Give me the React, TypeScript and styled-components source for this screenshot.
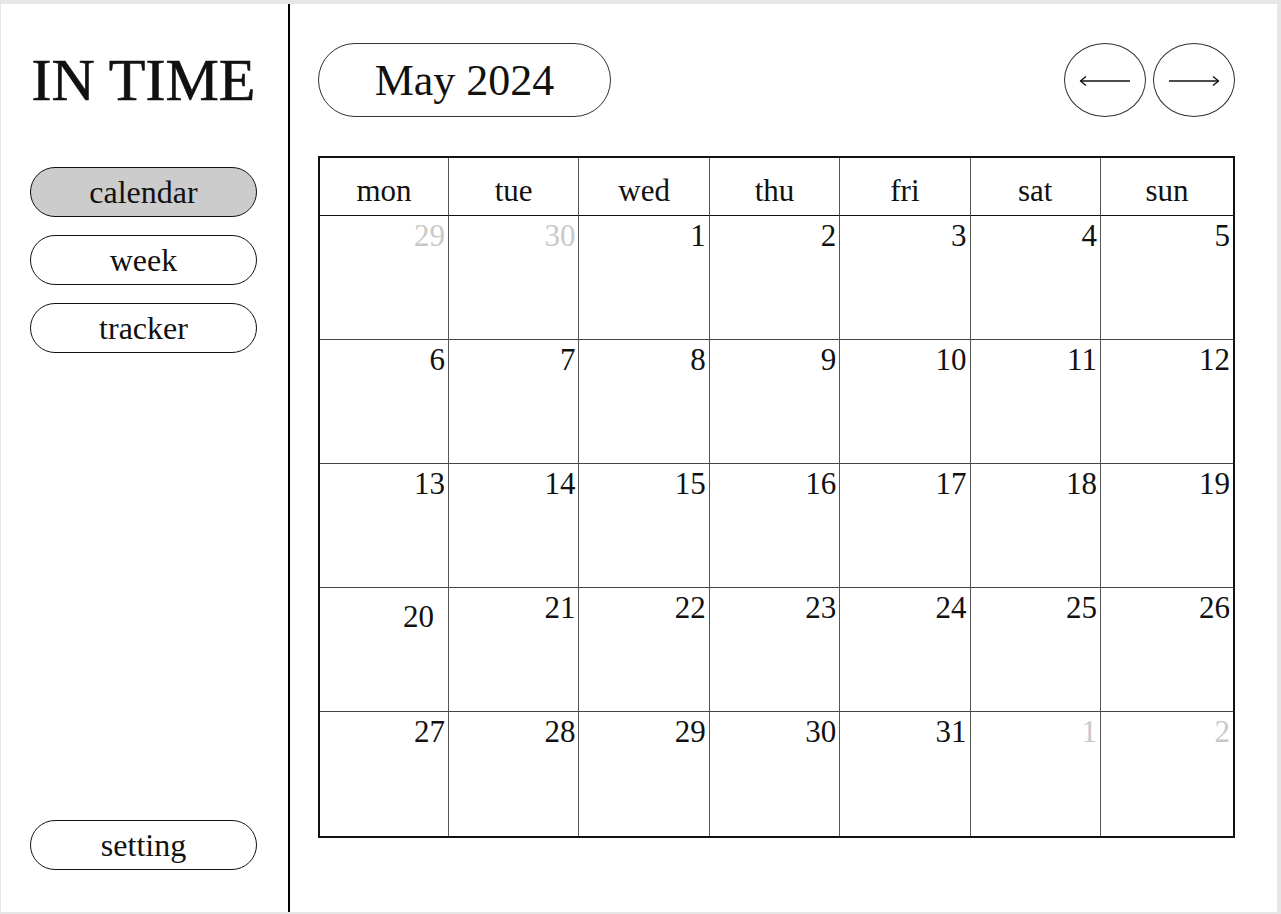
import React from "react";
import styled, { createGlobalStyle } from "styled-components";

const GlobalStyle = createGlobalStyle`
  html, body {
    margin: 0;
    padding: 0;
    background: #e6e6e6;
  }
  body {
    font-family: "Liberation Serif", "Times New Roman", serif;
    color: #111;
  }
`;

const Frame = styled.div`
  display: flex;
  margin: 4px 4px 0 1px;
  height: 908px;
  background: #fff;
`;

const Sidebar = styled.aside`
  width: 289px;
  flex-shrink: 0;
  border-right: 2px solid #000;
  display: flex;
  flex-direction: column;
  align-items: center;
  padding: 46px 2px 42px 0;
  box-sizing: border-box;
`;

const Logo = styled.h1`
  margin: 0 0 57px;
  font-size: 60px;
  font-weight: 400;
  line-height: 1;
  white-space: nowrap;
  -webkit-text-stroke: 0.6px #111;
`;

const NavList = styled.nav`
  display: flex;
  flex-direction: column;
  gap: 18px;
`;

const NavButton = styled.button<{ active?: boolean }>`
  width: 227px;
  height: 50px;
  box-sizing: border-box;
  border: 1.5px solid #111;
  border-radius: 25px;
  background: ${(p) => (p.active ? "#cccccc" : "#fff")};
  font-family: "Liberation Serif", "Times New Roman", serif;
  font-size: 32px;
  line-height: 1;
  color: #111;
  padding: 0;
  display: flex;
  align-items: center;
  justify-content: center;
`;

const Bottom = styled.div`
  margin-top: auto;
`;

const Main = styled.main`
  flex: 1;
  padding: 39px 42px 0 28px;
  display: flex;
  flex-direction: column;
`;

const TopBar = styled.div`
  display: flex;
  align-items: center;
  justify-content: space-between;
  height: 74px;
`;

const MonthPill = styled.div`
  width: 293px;
  height: 74px;
  box-sizing: border-box;
  border: 1px solid #333;
  border-radius: 37px;
  display: flex;
  align-items: center;
  justify-content: center;
  font-size: 44px;
  line-height: 1;
  padding-top: 2px;
`;

const ArrowGroup = styled.div`
  display: flex;
  gap: 7px;
`;

const ArrowButton = styled.button`
  width: 82px;
  height: 74px;
  box-sizing: border-box;
  border: 1px solid #333;
  border-radius: 50%;
  background: #fff;
  display: flex;
  align-items: center;
  justify-content: center;
  padding: 2px 0 0;
`;

const Calendar = styled.div`
  margin-top: 39px;
  height: 682px;
  box-sizing: border-box;
  border: 2px solid #111;
  display: grid;
  grid-template-columns: 129px repeat(5, 130.4px) 1fr;
  grid-template-rows: 58px repeat(5, 1fr);
`;

const HeadCell = styled.div<{ last?: boolean }>`
  border-right: ${(p) => (p.last ? "none" : "1px solid #555")};
  border-bottom: 1.5px solid #111;
  text-align: center;
  font-size: 31px;
  line-height: 1;
  padding-top: 17px;
  box-sizing: border-box;
`;

const DayCell = styled.div<{ last?: boolean; bottom?: boolean; muted?: boolean; odd?: boolean }>`
  border-right: ${(p) => (p.last ? "none" : "1px solid #555")};
  border-bottom: ${(p) => (p.bottom ? "none" : "1px solid #444")};
  text-align: right;
  font-size: 31px;
  line-height: 1;
  padding: ${(p) => (p.odd ? "13px 14px 0 0" : "4px 3px 0 0")};
  color: ${(p) => (p.muted ? "#c9c9c9" : "#111")};
  box-sizing: border-box;
`;

const Arrow: React.FC<{ dir: "left" | "right" }> = ({ dir }) => (
  <svg width="52" height="12" viewBox="0 0 52 12" fill="none">
    <g transform={dir === "right" ? "translate(52 0) scale(-1 1)" : undefined}>
      <path d="M1.5 6 H51" stroke="#111" strokeWidth="1.4" />
      <path d="M7 1.5 L1.5 6 L7 10.5" stroke="#111" strokeWidth="1.4" strokeLinejoin="round" />
    </g>
  </svg>
);

const weekdays = ["mon", "tue", "wed", "thu", "fri", "sat", "sun"];

const days: { n: number; muted?: boolean }[] = [
  { n: 29, muted: true },
  { n: 30, muted: true },
  ...Array.from({ length: 31 }, (_, i) => ({ n: i + 1 })),
  { n: 1, muted: true },
  { n: 2, muted: true },
];

export default function App() {
  return (
    <>
      <GlobalStyle />
      <Frame>
        <Sidebar>
          <Logo>IN TIME</Logo>
          <NavList>
            <NavButton active>calendar</NavButton>
            <NavButton>week</NavButton>
            <NavButton>tracker</NavButton>
          </NavList>
          <Bottom>
            <NavButton>setting</NavButton>
          </Bottom>
        </Sidebar>
        <Main>
          <TopBar>
            <MonthPill>May 2024</MonthPill>
            <ArrowGroup>
              <ArrowButton aria-label="previous month">
                <Arrow dir="left" />
              </ArrowButton>
              <ArrowButton aria-label="next month">
                <Arrow dir="right" />
              </ArrowButton>
            </ArrowGroup>
          </TopBar>
          <Calendar>
            {weekdays.map((d, i) => (
              <HeadCell key={d} last={i === 6}>
                {d}
              </HeadCell>
            ))}
            {days.map((d, i) => (
              <DayCell
                key={i}
                last={i % 7 === 6}
                bottom={i >= 28}
                muted={d.muted}
                odd={!d.muted && d.n === 20}
              >
                {d.n}
              </DayCell>
            ))}
          </Calendar>
        </Main>
      </Frame>
    </>
  );
}
